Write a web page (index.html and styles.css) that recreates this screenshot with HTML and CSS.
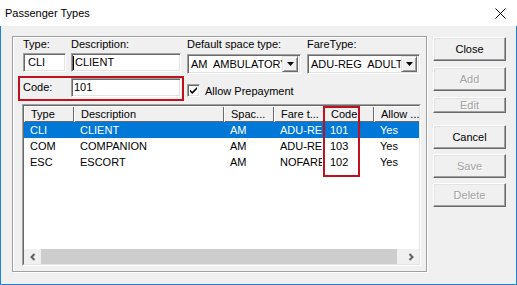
FILE: index.html
```html
<!DOCTYPE html>
<html>
<head>
<meta charset="utf-8">
<link rel="stylesheet" href="styles.css">
</head>
<body>
<div class="window">
  <div class="titlebar">
    <span class="title">Passenger Types</span>
    <svg class="close-x" width="11" height="11" viewBox="0 0 11 11"><path d="M0.5 0.5 L10.5 10.5 M10.5 0.5 L0.5 10.5" stroke="#000" stroke-width="1" fill="none"/></svg>
  </div>
  <div class="client">
    <div class="group">
      <div class="row labels">
        <span class="c-type">Type:</span>
        <span class="c-desc">Description:</span>
        <span class="c-space">Default space type:</span>
        <span class="c-fare">FareType:</span>
      </div>
      <div class="row fields">
        <div class="edit c-type wide-pad">CLI</div>
        <div class="edit c-desc"><span class="caret"></span>CLIENT</div>
        <div class="combo c-space">
          <span class="combo-text">AM  AMBULATORY</span>
          <span class="combo-btn"><svg width="7" height="4" viewBox="0 0 7 4"><path d="M0 0 H7 L3.5 4 Z" fill="#000"/></svg></span>
        </div>
        <div class="combo c-fare">
          <span class="combo-text">ADU-REG  ADULT</span>
          <span class="combo-btn"><svg width="7" height="4" viewBox="0 0 7 4"><path d="M0 0 H7 L3.5 4 Z" fill="#000"/></svg></span>
        </div>
      </div>
      <div class="row coderow">
        <span class="code-label">Code:</span>
        <div class="edit c-desc">101</div>
        <div class="check">
          <span class="box"><svg width="9" height="9" viewBox="0 0 9 9"><path d="M1 3.5 L3.2 5.8 L8 1 L8 3.2 L3.2 8 L1 5.8 Z" fill="#000"/></svg></span>
          <span class="check-text">Allow Prepayment</span>
        </div>
      </div>
      <div class="list">
        <div class="list-in">
          <div class="lv-head">
            <div class="hd w50">Type</div>
            <div class="hd w150">Description</div>
            <div class="hd w50">Spac...</div>
            <div class="hd w50">Fare t...</div>
            <div class="hd w50">Code</div>
            <div class="hd w50">Allow ...</div>
          </div>
          <div class="lv-row sel">
            <div class="cell w50"><span>CLI</span></div>
            <div class="cell w150"><span>CLIENT</span></div>
            <div class="cell w50"><span>AM</span></div>
            <div class="cell w50"><span>ADU-REG</span></div>
            <div class="cell w50"><span>101</span></div>
            <div class="cell w50"><span>Yes</span></div>
          </div>
          <div class="lv-row">
            <div class="cell w50"><span>COM</span></div>
            <div class="cell w150"><span>COMPANION</span></div>
            <div class="cell w50"><span>AM</span></div>
            <div class="cell w50"><span>ADU-REG</span></div>
            <div class="cell w50"><span>103</span></div>
            <div class="cell w50"><span>Yes</span></div>
          </div>
          <div class="lv-row">
            <div class="cell w50"><span>ESC</span></div>
            <div class="cell w150"><span>ESCORT</span></div>
            <div class="cell w50"><span>AM</span></div>
            <div class="cell w50"><span>NOFARE</span></div>
            <div class="cell w50"><span>102</span></div>
            <div class="cell w50"><span>Yes</span></div>
          </div>
          <div class="lv-fill"></div>
          <div class="hscroll">
            <span class="sb-btn"><svg width="8" height="8" viewBox="0 0 8 8"><path d="M5.5 1 L2.5 4 L5.5 7" stroke="#606060" stroke-width="2" fill="none"/></svg></span>
            <span class="sb-thumb"></span>
            <span class="sb-track"></span>
            <span class="sb-btn"><svg width="8" height="8" viewBox="0 0 8 8"><path d="M2.5 1 L5.5 4 L2.5 7" stroke="#606060" stroke-width="2" fill="none"/></svg></span>
          </div>
        </div>
      </div>
    </div>
    <div class="buttons">
      <div class="btn">Close</div>
      <div class="btn disabled gap6">Add</div>
      <div class="btn disabled gap6 short">Edit</div>
      <div class="btn gap12">Cancel</div>
      <div class="btn disabled gap5">Save</div>
      <div class="btn disabled gap5">Delete</div>
    </div>
  </div>
  <div class="hl hl-code"></div>
  <div class="hl hl-col"></div>
</div>
</body>
</html>
```
FILE: styles.css
```css
* { box-sizing: border-box; }
body {
  margin: 0;
  font-family: "Liberation Sans", Arial, sans-serif;
  font-size: 11px;
  color: #000;
  background: #fff;
}
.window {
  position: relative;
  width: 517px;
  height: 285px;
  display: flex;
  flex-direction: column;
}
.titlebar {
  height: 26px;
  flex: none;
  display: flex;
  align-items: center;
  background: #fff;
  padding-left: 5px;
}
.title { font-size: 11px; }
.close-x { margin-left: auto; margin-right: 11px; }
.client {
  flex: 1;
  display: flex;
  background: #f0f0f0;
  border: 1px solid #1883d7;
  border-top: 0;
  padding: 10px 10px 0 11px;
}
.group {
  width: 415px;
  height: 236px;
  border: 1px solid #a0a0a0;
  box-shadow: inset 1px 1px #fff, 1px 1px #fff;
  padding: 1px 0 0 10px;
  display: flex;
  flex-direction: column;
}
.row { display: flex; }
.labels { height: 13px; line-height: 13px; margin-bottom: 2px; }
.fields { height: 21px; margin-bottom: 4px; align-items: flex-start; }
.coderow { height: 19px; margin-bottom: 7px; align-items: flex-start; }
.c-type { width: 43px; margin-right: 5px; }
.c-desc { width: 110px; margin-right: 6px; }
.c-space { width: 114px; margin-right: 6px; }
.c-fare { width: 113px; }
.edit {
  height: 19px;
  background: #fff;
  border: 1px solid;
  border-color: #a0a0a0 #fff #fff #a0a0a0;
  box-shadow: inset 1px 1px #696969, inset -1px -1px #e3e3e3;
  padding-left: 2px;
  line-height: 17px;
  display: flex;
  align-items: center;
  white-space: pre;
}
.wide-pad { padding-left: 4px; }
.caret {
  width: 1px;
  height: 14px;
  background: #000;
  margin-right: 1px;
  margin-left: -1px;
}
.combo {
  height: 20px;
  margin-top: 1px;
  background: #fff;
  border: 1px solid;
  border-color: #a0a0a0 #fff #fff #a0a0a0;
  box-shadow: inset 1px 1px #696969, inset -1px -1px #e3e3e3;
  padding: 1px 2px 1px 2px;
  display: flex;
  align-items: center;
}
.combo-text {
  flex: 1;
  overflow: hidden;
  white-space: pre;
  line-height: 16px;
  height: 16px;
  padding-left: 1px;
}
.combo-btn {
  width: 16px;
  height: 16px;
  flex: none;
  background: #f0f0f0;
  border: 1px solid;
  border-color: #e3e3e3 #696969 #696969 #e3e3e3;
  box-shadow: inset 1px 1px #fff, inset -1px -1px #a0a0a0;
  display: flex;
  align-items: center;
  justify-content: center;
}
.code-label { width: 48px; line-height: 19px; }
.check {
  display: flex;
  align-items: center;
  height: 13px;
  margin-top: 6px;
}
.box {
  width: 13px;
  height: 13px;
  background: #fff;
  border: 1px solid;
  border-color: #a0a0a0 #fff #fff #a0a0a0;
  box-shadow: inset 1px 1px #696969, inset -1px -1px #e3e3e3;
  display: flex;
  align-items: center;
  justify-content: center;
}
.check-text { margin-left: 5px; line-height: 13px; padding-top: 1px; }
.list {
  width: 399px;
  height: 162px;
  margin-left: -1px;
  border: 1px solid;
  border-color: #a0a0a0 #fff #fff #a0a0a0;
}
.list-in {
  height: 100%;
  border: 1px solid;
  border-color: #696969 #e3e3e3 #e3e3e3 #696969;
  background: #fff;
  display: flex;
  flex-direction: column;
  overflow: hidden;
}
.lv-head { display: flex; height: 16px; flex: none; }
.hd {
  flex: none;
  height: 16px;
  line-height: 16px;
  padding-left: 7px;
  background: #f0f0f0;
  box-shadow: inset 1px 1px #fff, inset -1px -1px #696969;
  white-space: pre;
  overflow: hidden;
}
.w50 { width: 50px; }
.w150 { width: 150px; }
.lv-row {
  display: flex;
  height: 16px;
  line-height: 16px;
  flex: none;
  width: 395px;
  overflow: hidden;
}
.lv-row.sel { background: #0078d7; color: #fff; }
.cell { flex: none; padding-left: 6px; }
.cell span {
  display: block;
  width: 42px;
  overflow: hidden;
  white-space: pre;
}
.w150 span { width: 140px; }
.lv-fill { flex: 1; }
.hscroll {
  height: 15px;
  flex: none;
  display: flex;
  background: #f0f0f0;
}
.sb-btn {
  width: 17px;
  flex: none;
  display: flex;
  align-items: center;
  justify-content: center;
}
.sb-thumb { width: 356px; flex: none; background: #cdcdcd; }
.sb-track { flex: 1; }
.buttons {
  width: 73px;
  margin-left: 6px;
  padding-top: 1px;
  display: flex;
  flex-direction: column;
}
.btn {
  height: 24px;
  flex: none;
  display: flex;
  align-items: center;
  justify-content: center;
  background: #f0f0f0;
  border: 1px solid;
  border-color: #fff #696969 #696969 #fff;
  box-shadow: inset -1px -1px #a0a0a0, inset 1px 1px #e3e3e3;
}
.btn.short { height: 16px; }
.btn.disabled { color: #a0a0a0; text-shadow: 1px 1px #fff; }
.gap6 { margin-top: 6px; }
.gap12 { margin-top: 12px; }
.gap5 { margin-top: 5px; }
.hl {
  position: absolute;
  border: 2px solid #c0111f;
  pointer-events: none;
}
.hl-code { left: 18px; top: 76px; width: 166px; height: 25px; }
.hl-col { left: 323px; top: 106px; width: 37px; height: 71px; }
```
